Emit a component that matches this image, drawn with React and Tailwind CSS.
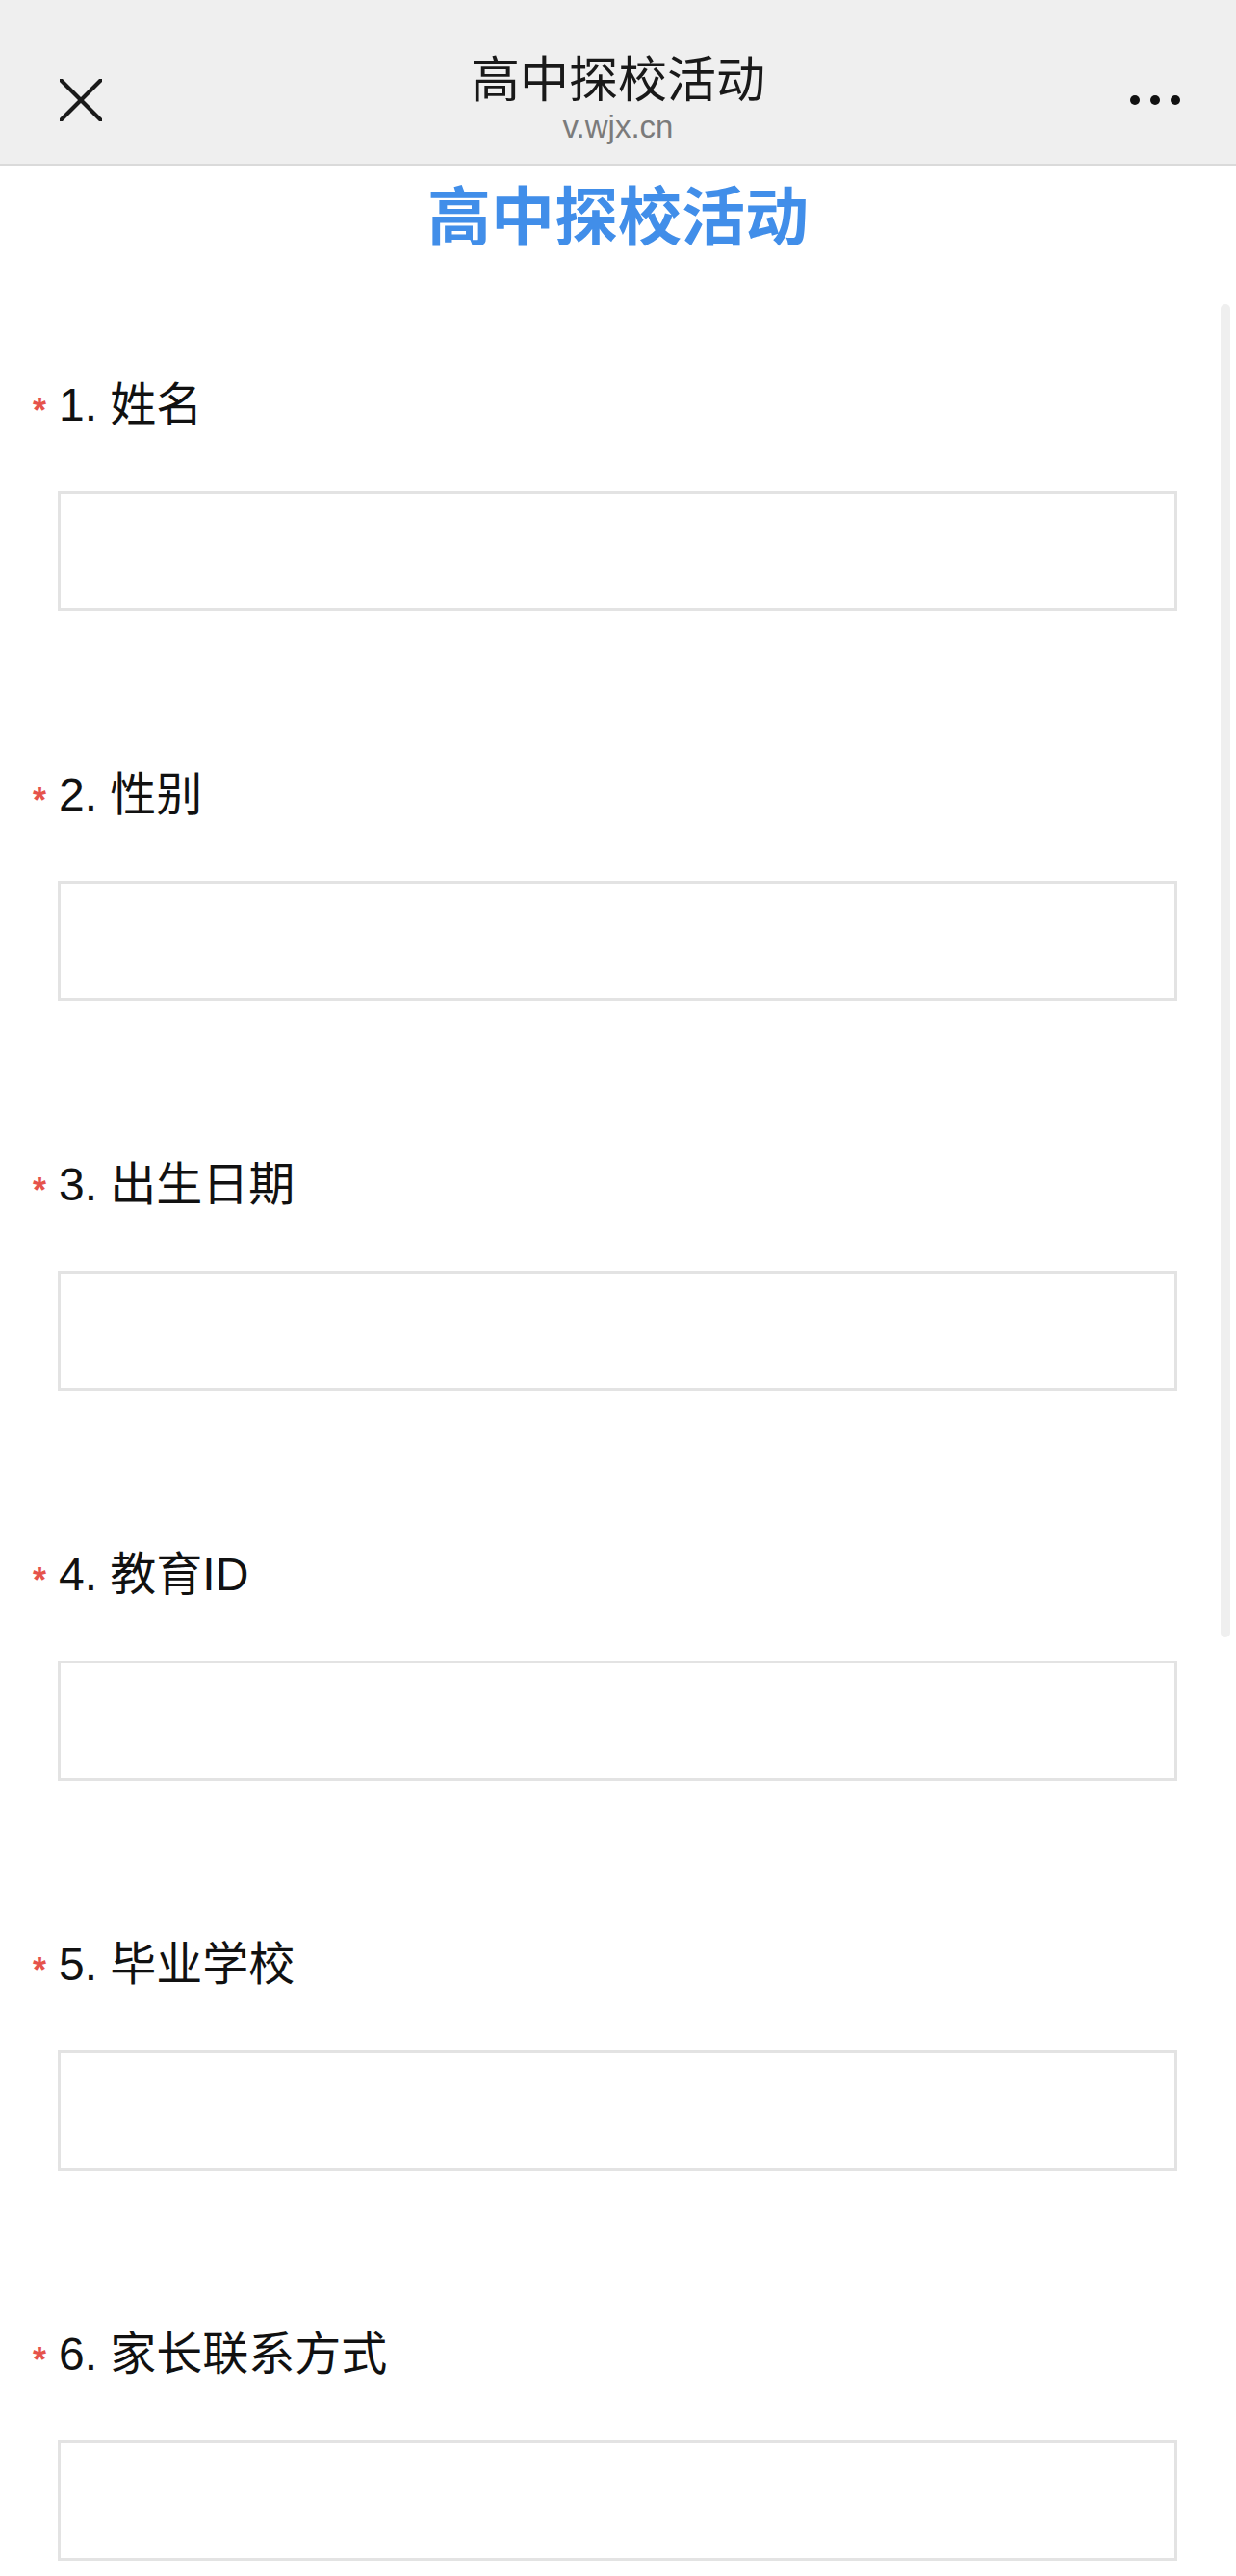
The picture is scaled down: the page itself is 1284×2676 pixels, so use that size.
const questions = [
  "1. 姓名",
  "2. 性别",
  "3. 出生日期",
  "4. 教育ID",
  "5. 毕业学校",
  "6. 家长联系方式",
]

const font = { fontFamily: '"Liberation Sans", "Noto Sans CJK SC", sans-serif' }

const Question = ({ label }) => {
  return (
    <div className="flex flex-col">
      <div className="flex items-center h-[60px] pl-[34px]">
        <span className="w-[27px] text-[36px] leading-none font-bold text-[#e5534b] translate-y-[6px]">*</span>
        <span className="text-[48px] leading-[60px] text-[#111]">{label}</span>
      </div>
      <input
        type="text"
        readOnly
        className="mt-[59px] ml-[60px] mr-[61px] h-[125px] border-[3px] border-[#e3e3e3] bg-white outline-none"
      />
    </div>
  )
}

const App = () => {
  return (
    <div className="relative w-full min-h-screen bg-white" style={font}>
      {/* top bar */}
      <div className="h-[172px] bg-[#efefef] border-b-2 border-[#dadada] pt-[38px] grid grid-cols-[1fr_auto_1fr] items-center">
        <div className="pl-[62px]">
          <svg width="44" height="44" viewBox="0 0 44 44">
            <path d="M1.5 1.5 L42.5 42.5 M42.5 1.5 L1.5 42.5" stroke="#1a1a1a" strokeWidth="4.2" strokeLinecap="square" />
          </svg>
        </div>
        <div className="flex flex-col items-center">
          <div className="text-[51px] leading-[56px] text-[#191919]">高中探校活动</div>
          <div className="text-[33px] leading-[40px] text-[#7b7b7b]">v.wjx.cn</div>
        </div>
        <div className="flex justify-end gap-[11px] pr-[58px]">
          <span className="w-[10px] h-[10px] rounded-full bg-[#111]" />
          <span className="w-[10px] h-[10px] rounded-full bg-[#111]" />
          <span className="w-[10px] h-[10px] rounded-full bg-[#111]" />
        </div>
      </div>

      <h1 className="mt-[14px] text-center text-[66px] leading-[80px] font-bold text-[#418ee9]">高中探校活动</h1>

      <div className="mt-[125px] flex flex-col gap-[161px] pb-[16px]">
        {questions.map((q) => (
          <Question key={q} label={q} />
        ))}
      </div>

      {/* scrollbar */}
      <div className="absolute right-[6px] top-[316px] w-[10px] h-[1385px] rounded-full bg-[#efefef]" />
    </div>
  )
}

export default App
